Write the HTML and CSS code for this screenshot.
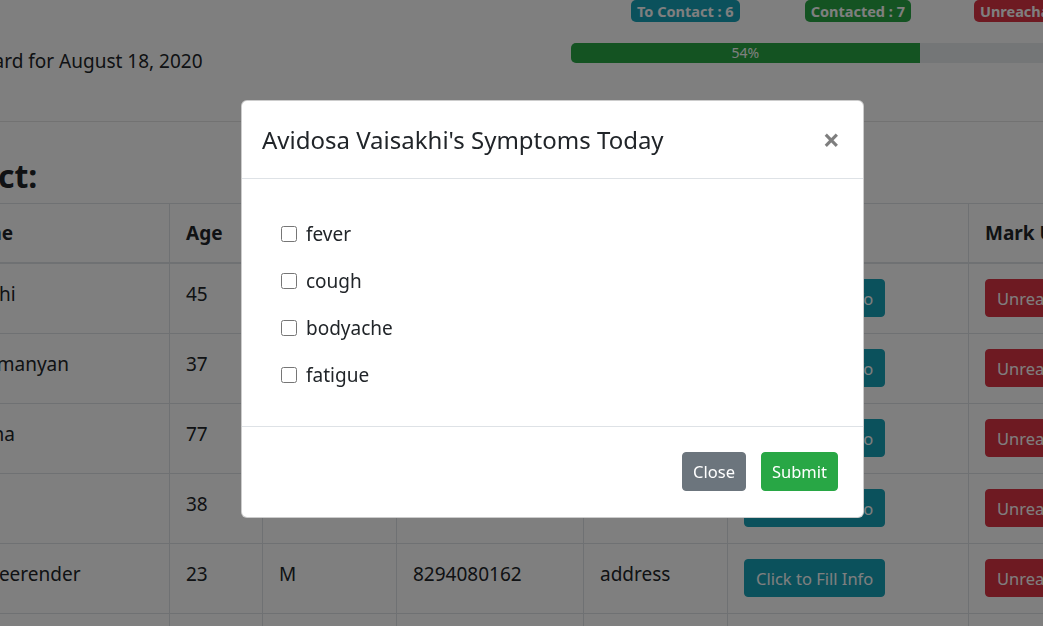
FILE: index.html
```html
<!DOCTYPE html>
<html lang="en">
<head>
<meta charset="utf-8">
<title>Dashboard</title>
<link rel="stylesheet" href="styles.css">
</head>
<body>
<div class="page">
  <div class="topbar">
    <div class="title-col">
      <p class="date-title">Dashboard for August 18, 2020</p>
    </div>
    <div class="stats-col">
      <div class="badges">
        <span class="badge badge-info">To Contact : 6</span>
        <span class="badge badge-success">Contacted : 7</span>
        <span class="badge badge-danger">Unreachable : 0</span>
      </div>
      <div class="progress">
        <div class="progress-bar" style="width:54%">54%</div>
      </div>
    </div>
  </div>
  <hr class="divider">
  <h3 class="section-title">To Contact:</h3>
  <table class="table">
    <thead>
      <tr>
        <th class="c-name">Patient's Name</th>
        <th class="c-age">Age</th>
        <th class="c-gender">Gender</th>
        <th class="c-phone">Phone Number</th>
        <th class="c-addr">Address</th>
        <th class="c-action">Action</th>
        <th class="c-mark">Mark Unreachable</th>
      </tr>
    </thead>
    <tbody>
      <tr>
        <td>Avidosa Vaisakhi</td><td>45</td><td>F</td><td>9848022338</td><td>address</td>
        <td><button class="btn btn-info">Click to Fill Info</button></td>
        <td><button class="btn btn-danger">Unreachable</button></td>
      </tr>
      <tr>
        <td>Venkata Subramanyan</td><td>37</td><td>M</td><td>9440123456</td><td>address</td>
        <td><button class="btn btn-info">Click to Fill Info</button></td>
        <td><button class="btn btn-danger">Unreachable</button></td>
      </tr>
      <tr>
        <td>Lakshmi Krishna</td><td>77</td><td>F</td><td>9866543210</td><td>address</td>
        <td><button class="btn btn-info">Click to Fill Info</button></td>
        <td><button class="btn btn-danger">Unreachable</button></td>
      </tr>
      <tr>
        <td>Ravi Teja</td><td>38</td><td>M</td><td>9959876543</td><td>address</td>
        <td><button class="btn btn-info">Click to Fill Info</button></td>
        <td><button class="btn btn-danger">Unreachable</button></td>
      </tr>
      <tr>
        <td>Kommireddy Veerender</td><td>23</td><td>M</td><td>8294080162</td><td>address</td>
        <td><button class="btn btn-info">Click to Fill Info</button></td>
        <td><button class="btn btn-danger">Unreachable</button></td>
      </tr>
      <tr>
        <td>Sravani Reddy</td><td>29</td><td>F</td><td>7702345678</td><td>address</td>
        <td><button class="btn btn-info">Click to Fill Info</button></td>
        <td><button class="btn btn-danger">Unreachable</button></td>
      </tr>
    </tbody>
  </table>
</div>

<div class="backdrop"></div>

<div class="modal-wrap">
  <div class="modal">
    <div class="modal-header">
      <h5 class="modal-title">Avidosa Vaisakhi's Symptoms Today</h5>
      <button class="close" aria-label="Close">&times;</button>
    </div>
    <div class="modal-body">
      <label class="check"><input type="checkbox"><span>fever</span></label>
      <label class="check"><input type="checkbox"><span>cough</span></label>
      <label class="check"><input type="checkbox"><span>bodyache</span></label>
      <label class="check"><input type="checkbox"><span>fatigue</span></label>
    </div>
    <div class="modal-footer">
      <button class="btn btn-secondary">Close</button>
      <button class="btn btn-success">Submit</button>
    </div>
  </div>
</div>
</body>
</html>
```

FILE: styles.css
```css
* { box-sizing: border-box; }

html, body {
  margin: 0;
  padding: 0;
  height: 100%;
  overflow: hidden;
}

body {
  font-family: "Noto Sans", "Open Sans", sans-serif;
  font-size: 19px;
  color: #212529;
  background: #fff;
}

.page {
  margin-left: -161px;
  width: 1400px;
}

/* top bar */
.topbar {
  display: flex;
  height: 121px;
}

.title-col {
  width: 732px;
  padding-left: 86px;
  padding-top: 46px;
}

.date-title {
  margin: 0;
  font-size: 19px;
  line-height: 30px;
}

.stats-col {
  width: 646px;
  display: flex;
  flex-direction: column;
}

.badges {
  display: flex;
  gap: 65px;
  padding-left: 60px;
}

.badge {
  display: inline-block;
  font-size: 14.5px;
  font-weight: 700;
  line-height: 16px;
  padding: 3px 6px;
  border-radius: 5px;
  color: #fff;
  white-space: nowrap;
}

.badge-info { background: #17a2b8; }
.badge-success { background: #28a745; }
.badge-danger { background: #dc3545; margin-left: -2px; }

.progress {
  margin-top: 21px;
  height: 20px;
  background: #e9ecef;
  border-radius: 5px;
  overflow: hidden;
  display: flex;
}

.progress-bar {
  background: #28a745;
  color: #fff;
  font-size: 14px;
  line-height: 20px;
  text-align: center;
}

.divider {
  margin: 0;
  border: 0;
  border-top: 1px solid rgba(0,0,0,.1);
}

.section-title {
  margin: 0;
  padding-top: 34px;
  padding-left: 20px;
  height: 81px;
  font-size: 32px;
  font-weight: 700;
  line-height: 40px;
}

/* table */
.table {
  border-collapse: collapse;
  font-size: 19px;
}

.table th, .table td {
  border: 1px solid #dee2e6;
  padding: 14px 15px 14px 16px;
  line-height: 30px;
  text-align: left;
  vertical-align: top;
  white-space: nowrap;
}

.table th.c-name, .table td:first-child {
  padding-left: 28px;
}

.table thead th {
  border-bottom: 2px solid #dee2e6;
  font-weight: 700;
}

.table td {
  padding-top: 15px;
  padding-bottom: 15px;
  height: 70px;
}

.c-name { width: 330px; }
.c-age { width: 93px; }
.c-gender { width: 134px; }
.c-phone { width: 187px; }
.c-addr { width: 144px; }
.c-action { width: 241px; }
.c-mark { width: 220px; }

.btn {
  font-family: inherit;
  font-size: 16.5px;
  line-height: 27px;
  height: 39px;
  padding: 5px 10px;
  border: 1px solid transparent;
  border-radius: 4px;
  color: #fff;
  cursor: pointer;
}

.table .btn {
  height: 38px;
  padding: 5px 11px;
}

.btn-info { background: #17a2b8; border-color: #17a2b8; }
.btn-danger { background: #dc3545; border-color: #dc3545; }
.btn-secondary { background: #6c757d; border-color: #6c757d; }
.btn-success { background: #28a745; border-color: #28a745; }

/* modal */
.backdrop {
  position: fixed;
  inset: 0;
  background: rgba(0,0,0,.5);
}

.modal-wrap {
  position: fixed;
  inset: 0;
  padding-top: 100px;
  padding-left: 241px;
}

.modal {
  width: 623px;
  background: #fff;
  border: 1px solid rgba(0,0,0,.2);
  border-radius: 6px;
}

.modal-header {
  display: flex;
  align-items: center;
  justify-content: space-between;
  padding: 20px 20px 20px 20px;
  height: 78px;
  border-bottom: 1px solid #dee2e6;
}

.modal-title {
  margin: 0;
  font-size: 24px;
  font-weight: 400;
  line-height: 36px;
}

.close {
  background: none;
  border: 0;
  padding: 0 3px 0 0;
  font-family: inherit;
  font-size: 30px;
  font-weight: 700;
  line-height: 1;
  color: #000;
  opacity: .5;
}

.modal-body {
  padding: 31px 20px 28px 39px;
  display: flex;
  flex-direction: column;
}

.check {
  display: flex;
  align-items: center;
  height: 47px;
  gap: 9px;
  font-size: 19px;
}

.check input {
  margin: 0;
  width: 16px;
  height: 16px;
}

.modal-footer {
  display: flex;
  justify-content: flex-end;
  gap: 15px;
  padding: 25px 25px 26px 20px;
  border-top: 1px solid #dee2e6;
}
```
